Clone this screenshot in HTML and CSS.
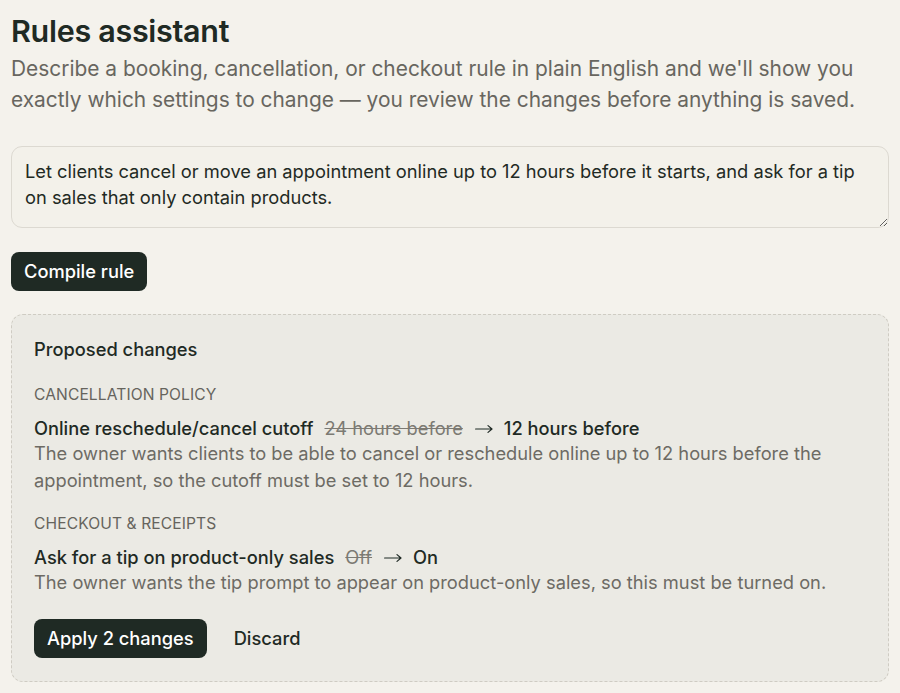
FILE: index.html
```html
<!DOCTYPE html>
<html lang="en">
<head>
<meta charset="utf-8">
<title>Rules assistant</title>
<link rel="stylesheet" href="styles.css">
</head>
<body>
<main class="page">
  <h1 class="title">Rules assistant</h1>
  <p class="lead">Describe a booking, cancellation, or checkout rule in plain English and we'll show you exactly which settings to change — you review the changes before anything is saved.</p>
  <textarea class="prompt" rows="3">Let clients cancel or move an appointment online up to 12 hours before it starts, and ask for a tip on sales that only contain products.</textarea>
  <div class="actions-top">
    <button class="btn-primary" type="button">Compile rule</button>
  </div>
  <section class="panel">
    <h2 class="panel-title">Proposed changes</h2>
    <div class="group">
      <div class="group-label">CANCELLATION POLICY</div>
      <div class="change">
        <div class="change-line"><span class="setting">Online reschedule/cancel cutoff</span><s class="old">24 hours before</s><svg class="arrow" width="18" height="10" viewBox="0 0 18 10" aria-label="to"><path d="M0.6 5H17M13 1.6L17 5L13 8.4" fill="none" stroke="#1f2a24" stroke-width="1.2" stroke-linecap="round" stroke-linejoin="round"/></svg><span class="new">12 hours before</span></div>
        <p class="reason">The owner wants clients to be able to cancel or reschedule online up to 12 hours before the appointment, so the cutoff must be set to 12 hours.</p>
      </div>
    </div>
    <div class="group">
      <div class="group-label">CHECKOUT &amp; RECEIPTS</div>
      <div class="change">
        <div class="change-line"><span class="setting">Ask for a tip on product-only sales</span><s class="old">Off</s><svg class="arrow" width="18" height="10" viewBox="0 0 18 10" aria-label="to"><path d="M0.6 5H17M13 1.6L17 5L13 8.4" fill="none" stroke="#1f2a24" stroke-width="1.2" stroke-linecap="round" stroke-linejoin="round"/></svg><span class="new">On</span></div>
        <p class="reason">The owner wants the tip prompt to appear on product-only sales, so this must be turned on.</p>
      </div>
    </div>
    <div class="panel-actions">
      <button class="btn-primary" type="button">Apply 2 changes</button>
      <button class="btn-text" type="button">Discard</button>
    </div>
  </section>
</main>
</body>
</html>
```
FILE: styles.css
```css
* { box-sizing: border-box; }
html, body { margin: 0; padding: 0; }
body {
  background: #f4f2ec;
  color: #1f2a24;
  font-family: Inter, "Noto Sans", sans-serif;
}
.page {
  padding: 12px 11px 10px 11px;
  display: flex;
  flex-direction: column;
}
.title {
  margin: 0;
  font-size: 30.5px;
  font-weight: 600;
  line-height: 38px;
  letter-spacing: -0.3px;
  color: #1f2a24;
}
.lead {
  margin: 3px 0 0;
  font-size: 20.9px;
  line-height: 31px;
  color: #68665f;
}
.prompt {
  margin-top: 31px;
  width: 100%;
  height: 82px;
  padding: 11px 13px;
  border: 1px solid #dcd9d1;
  border-radius: 11px;
  background: #f3f1ea;
  font-family: Inter, "Noto Sans", sans-serif;
  font-size: 18.3px;
  line-height: 26px;
  color: #1f2a24;
  resize: vertical;
}
.actions-top {
  margin-top: 24px;
  display: flex;
}
.btn-primary {
  background: #1f2a24;
  color: #ffffff;
  border: none;
  border-radius: 8px;
  font-family: Inter, "Noto Sans", sans-serif;
  font-size: 18.3px;
  font-weight: 500;
  line-height: 22px;
  padding: 8px 13px 9px;
  height: 39px;
}
.panel {
  margin-top: 23px;
  border: 1px dashed #cfccc3;
  border-radius: 12px;
  background: #ebeae4;
  padding: 23px 22px 23px;
}
.panel-title {
  margin: 0;
  font-size: 18.3px;
  font-weight: 500;
  line-height: 22px;
}
.group { margin-top: 25px; }
.group + .group { margin-top: 21px; }
.group-label {
  font-size: 15.6px;
  line-height: 20px;
  color: #66645d;
  letter-spacing: 0.1px;
}
.change { margin-top: 11px; }
.change-line {
  font-size: 18.3px;
  line-height: 24px;
  display: flex;
  align-items: baseline;
}
.setting { font-weight: 500; }
.old {
  margin-left: 11px;
  color: #7c7a73;
}
.arrow {
  margin: 0 11px 0 12px;
  flex: none;
  align-self: center;
  position: relative;
  top: 1px;
}
.new { font-weight: 500; }
.reason {
  margin: 0;
  font-size: 18.3px;
  line-height: 26.5px;
  color: #6d6b64;
}
.panel-actions {
  margin-top: 23px;
  display: flex;
  align-items: center;
  gap: 14px;
}
.btn-text {
  background: none;
  border: none;
  font-family: Inter, "Noto Sans", sans-serif;
  font-size: 18.3px;
  font-weight: 500;
  color: #1f2a24;
  padding: 8px 13px;
}
```
